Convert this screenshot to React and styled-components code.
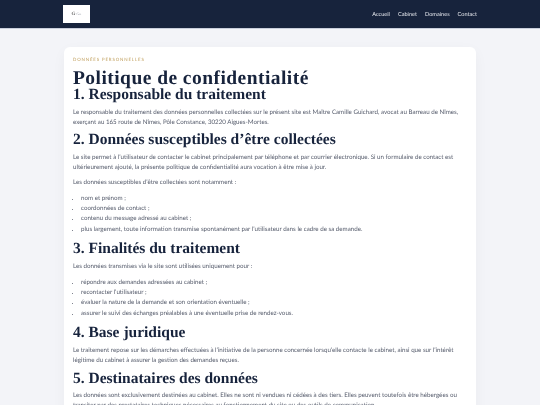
import React from 'react';
import styled, { createGlobalStyle } from 'styled-components';

const GlobalStyle = createGlobalStyle`
  html, body {
    margin: 0;
    padding: 0;
    height: 405px;
    overflow: hidden;
    background: #f3f4f8;
  }
  * { box-sizing: border-box; }
  body { text-rendering: geometricPrecision; }
  #root { filter: blur(0.2px); }
`;

const Header = styled.header`
  height: 29px;
  background: #17233c;
  border-bottom: 1px solid #c9cedb;
  padding: 0 63px;
  display: flex;
  align-items: center;
  justify-content: space-between;
`;

const Logo = styled.div`
  width: 27px;
  height: 18px;
  background: #fff;
  display: flex;
  align-items: center;
  justify-content: center;
  gap: 1px;
  font-family: 'Liberation Serif', serif;
  color: #9a9ea8;
  font-size: 3.4px;
  b { font-size: 5px; color: #666; }
`;

const Nav = styled.nav`
  display: flex;
  gap: 8px;
  a {
    font-family: Lato, sans-serif;
    font-size: 5.6px;
    color: #e6e8ee;
    text-decoration: none;
  }
`;

const Card = styled.main`
  width: 412px;
  margin: 18px auto 0;
  background: #fff;
  border-radius: 6px;
  padding: 10px 9px 20px;
  box-shadow: 0 4px 14px rgba(23, 35, 60, 0.04);
  font-family: Lato, sans-serif;
  color: #555b6b;
`;

const Eyebrow = styled.div`
  font-size: 4.4px;
  letter-spacing: 0.85px;
  color: #bd9a55;
  line-height: 6px;
  text-transform: uppercase;
  margin-bottom: 8px;
`;

const Title = styled.h1`
  margin: 0;
  font-family: 'Liberation Serif', serif;
  font-size: 19.5px;
  letter-spacing: 0.45px;
  line-height: 16px;
  font-weight: 700;
  color: #17233c;
`;

const Heading = styled.h2`
  margin: 0 0 4.5px;
  font-family: 'Liberation Serif', serif;
  font-size: 15.5px;
  line-height: 16px;
  font-weight: 700;
  color: #17233c;
`;

const Text = styled.p`
  margin: 0 0 4.5px;
  font-size: 6.2px;
  line-height: 10.2px;
`;

const List = styled.ul`
  margin: 6px 0 6.4px;
  padding: 0 0 0 8px;
  font-size: 6.2px;
  line-height: 10.2px;
  li::marker {
    font-size: 5.5px;
    color: #555b6b;
  }
`;

export default function App() {
  return (
    <>
      <GlobalStyle />
      <Header>
        <Logo><b>G</b>Gu.</Logo>
        <Nav>
          <a href="#accueil">Accueil</a>
          <a href="#cabinet">Cabinet</a>
          <a href="#domaines">Domaines</a>
          <a href="#contact">Contact</a>
        </Nav>
      </Header>
      <Card>
        <Eyebrow>Données personnelles</Eyebrow>
        <Title>Politique de confidentialité</Title>
        <Heading>1. Responsable du traitement</Heading>
        <Text>Le responsable du traitement des données personnelles collectées sur le présent site est Maître Camille Guichard, avocat au Barreau de Nîmes, exerçant au 165 route de Nîmes, Pôle Constance, 30220 Aigues-Mortes.</Text>
        <Heading>2. Données susceptibles d’être collectées</Heading>
        <Text>Le site permet à l’utilisateur de contacter le cabinet principalement par téléphone et par courrier électronique. Si un formulaire de contact est ultérieurement ajouté, la présente politique de confidentialité aura vocation à être mise à jour.</Text>
        <Text>Les données susceptibles d’être collectées sont notamment :</Text>
        <List>
          <li>nom et prénom ;</li>
          <li>coordonnées de contact ;</li>
          <li>contenu du message adressé au cabinet ;</li>
          <li>plus largement, toute information transmise spontanément par l’utilisateur dans le cadre de sa demande.</li>
        </List>
        <Heading>3. Finalités du traitement</Heading>
        <Text>Les données transmises via le site sont utilisées uniquement pour :</Text>
        <List>
          <li>répondre aux demandes adressées au cabinet ;</li>
          <li>recontacter l’utilisateur ;</li>
          <li>évaluer la nature de la demande et son orientation éventuelle ;</li>
          <li>assurer le suivi des échanges préalables à une éventuelle prise de rendez-vous.</li>
        </List>
        <Heading>4. Base juridique</Heading>
        <Text>Le traitement repose sur les démarches effectuées à l’initiative de la personne concernée lorsqu’elle contacte le cabinet, ainsi que sur l’intérêt légitime du cabinet à assurer la gestion des demandes reçues.</Text>
        <Heading>5. Destinataires des données</Heading>
        <Text>Les données sont exclusivement destinées au cabinet. Elles ne sont ni vendues ni cédées à des tiers. Elles peuvent toutefois être hébergées ou transiter par des prestataires techniques nécessaires au fonctionnement du site ou des outils de communication.</Text>
      </Card>
    </>
  );
}
